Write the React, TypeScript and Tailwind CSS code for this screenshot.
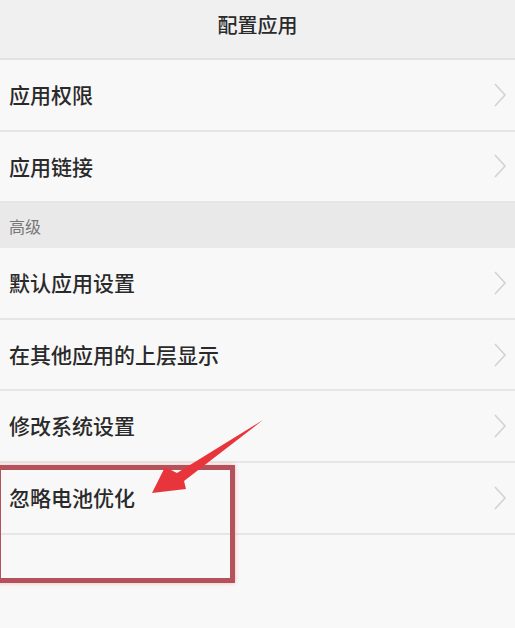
import { ReactNode } from 'react';

const font = { fontFamily: '"Noto Sans CJK SC", "Noto Sans", sans-serif' };

function Chevron() {
  return (
    <svg width="14" height="26" viewBox="0 0 14 26" className="mr-[8px]">
      <polyline points="2,2 12,13 2,24" fill="none" stroke="#d2d2d2" strokeWidth="1.6" />
    </svg>
  );
}

function Row({ children }: { children: ReactNode }) {
  return (
    <div className="flex h-[71.6px] items-center justify-between border-b-2 border-[#e6e6e6] bg-[#f8f8f8] pl-[9px]">
      <span className="text-[21px] font-medium text-[#2a2a2a]">{children}</span>
      <Chevron />
    </div>
  );
}

export default function App() {
  return (
    <div className="relative h-[628px] w-[515px] overflow-hidden bg-[#f8f8f8]" style={font}>
      {/* 标题栏 */}
      <div className="flex h-[60px] items-center justify-center border-b-2 border-[#e2e2e2] bg-[#f0f0f0] pb-[8px]">
        <span className="text-[20px] font-medium text-[#2a2a2a]">配置应用</span>
      </div>

      <Row>应用权限</Row>
      <Row>应用链接</Row>

      <div className="flex h-[45px] items-center bg-[#e9e9e9] pl-[9px]">
        <span className="text-[16px] text-[#777777]">高级</span>
      </div>

      <Row>默认应用设置</Row>
      <Row>在其他应用的上层显示</Row>
      <Row>修改系统设置</Row>
      <Row>忽略电池优化</Row>

      {/* 红框标注 */}
      <div className="absolute left-[-4px] top-[465px] h-[118px] w-[239px] border-[5px] border-[#b3525a] shadow-[0_0_4px_rgba(255,120,120,0.5)]" />

      {/* 箭头 */}
      <svg className="absolute left-0 top-0" width="515" height="628" viewBox="0 0 515 628">
        <polygon
          points="152,493 165,467 177,473 263,420 184,481 186,489"
          fill="#e8353b"
        />
      </svg>
    </div>
  );
}
